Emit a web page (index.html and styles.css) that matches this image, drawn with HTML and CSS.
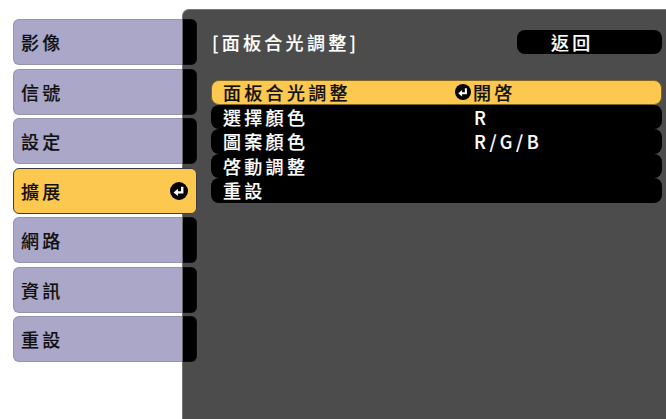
FILE: index.html
```html
<!DOCTYPE html>
<html lang="zh-Hant">
<head>
<meta charset="utf-8">
<title>面板合光調整</title>
<link rel="stylesheet" href="styles.css">
</head>
<body>
<div class="screen">
  <nav class="sidebar">
    <div class="tab">影像</div>
    <div class="tab">信號</div>
    <div class="tab">設定</div>
    <div class="tab tab-active"><span>擴展</span>
      <svg class="enter enter-lg" viewBox="0 0 20 20"><circle cx="10" cy="10" r="10" fill="#000"/><path d="M13.6 5.2V11.6H8" fill="none" stroke="#fff" stroke-width="2.6"/><polygon points="4,11.6 8.8,7.6 8.8,15.6" fill="#fff"/></svg>
    </div>
    <div class="tab">網路</div>
    <div class="tab">資訊</div>
    <div class="tab">重設</div>
  </nav>
  <main class="panel">
    <header class="panel-head">
      <div class="title">[面板合光調整]</div>
      <div class="back">返回</div>
    </header>
    <ul class="menu">
      <li class="row row-active"><span class="label">面板合光調整</span><span class="value value-icon"><svg class="enter enter-sm" viewBox="0 0 20 20"><circle cx="10" cy="10" r="10" fill="#000"/><path d="M13.6 5.2V11.6H8" fill="none" stroke="#fff" stroke-width="2.6"/><polygon points="4,11.6 8.8,7.6 8.8,15.6" fill="#fff"/></svg>開啓</span></li>
      <li class="row"><span class="label">選擇顏色</span><span class="value">R</span></li>
      <li class="row"><span class="label">圖案顏色</span><span class="value">R/G/B</span></li>
      <li class="row"><span class="label">啓動調整</span><span class="value"></span></li>
      <li class="row"><span class="label">重設</span><span class="value"></span></li>
    </ul>
  </main>
</div>
</body>
</html>
```

FILE: styles.css
```css
html, body {
  margin: 0;
  height: 100%;
  background: #fff;
}

body {
  font-family: "Noto Sans CJK TC", "Noto Sans CJK SC", sans-serif;
  font-size: 18px;
  letter-spacing: 3.3px;
  font-weight: 500;
  -webkit-text-stroke: 0.15px currentColor;
}

.screen {
  display: flex;
  height: 419px;
  overflow: hidden;
}

.sidebar {
  flex: none;
  width: 169px;
  padding: 19px 0 0 13px;
  display: flex;
  flex-direction: column;
  gap: 3.5px;
}

.tab {
  position: relative;
  z-index: 1;
  flex: none;
  width: 184px;
  height: 46px;
  box-sizing: border-box;
  border-radius: 6px;
  background: linear-gradient(to right, #aaa7c8 0 169px, #6a6a6a 169px 170px, #000 170px);
  box-shadow: inset 0 0 0 1px rgba(60, 60, 80, 0.18);
  display: flex;
  align-items: center;
  padding-left: 8px;
  color: #111;
  line-height: 1;
}

.tab-active {
  background: #fcc84f;
  border: 1px solid #3c3c3c;
  box-shadow: none;
  justify-content: space-between;
  padding-left: 7px;
  padding-right: 8px;
}

.enter {
  display: block;
  flex: none;
}

.enter-lg {
  width: 18px;
  height: 18px;
}

.enter-sm {
  width: 16px;
  height: 16px;
  margin-right: 2px;
}

.panel {
  flex: 1;
  margin-top: 9px;
  background: #4c4c4c;
  border-top: 1px solid #767676;
  border-left: 1px solid #767676;
  border-top-left-radius: 7px;
  padding: 20px 4px 0 28px;
  color: #fff;
}

.panel-head {
  display: flex;
  justify-content: space-between;
  align-items: center;
  height: 24px;
  line-height: 1;
}

.title {
  padding-left: 1px;
}

.back {
  width: 145px;
  height: 24px;
  box-sizing: border-box;
  background: #000;
  border-radius: 8px;
  padding-left: 34px;
  display: flex;
  align-items: center;
}

.menu {
  list-style: none;
  margin: 26px 0 0;
  padding: 0;
}

.row {
  height: 24.5px;
  box-sizing: border-box;
  display: flex;
  align-items: center;
  background: #000;
  border-radius: 8px;
  padding-left: 12px;
  line-height: 1;
}

.row-active {
  background: #fcc84f;
  color: #111;
  border: 1px solid #7d6526;
  padding-left: 11px;
}

.label {
  flex: none;
  width: 232px;
}

.value {
  display: flex;
  align-items: center;
  padding-left: 19px;
  letter-spacing: 3.6px;
}

.value-icon {
  padding-left: 0;
  letter-spacing: 3.3px;
}
```
